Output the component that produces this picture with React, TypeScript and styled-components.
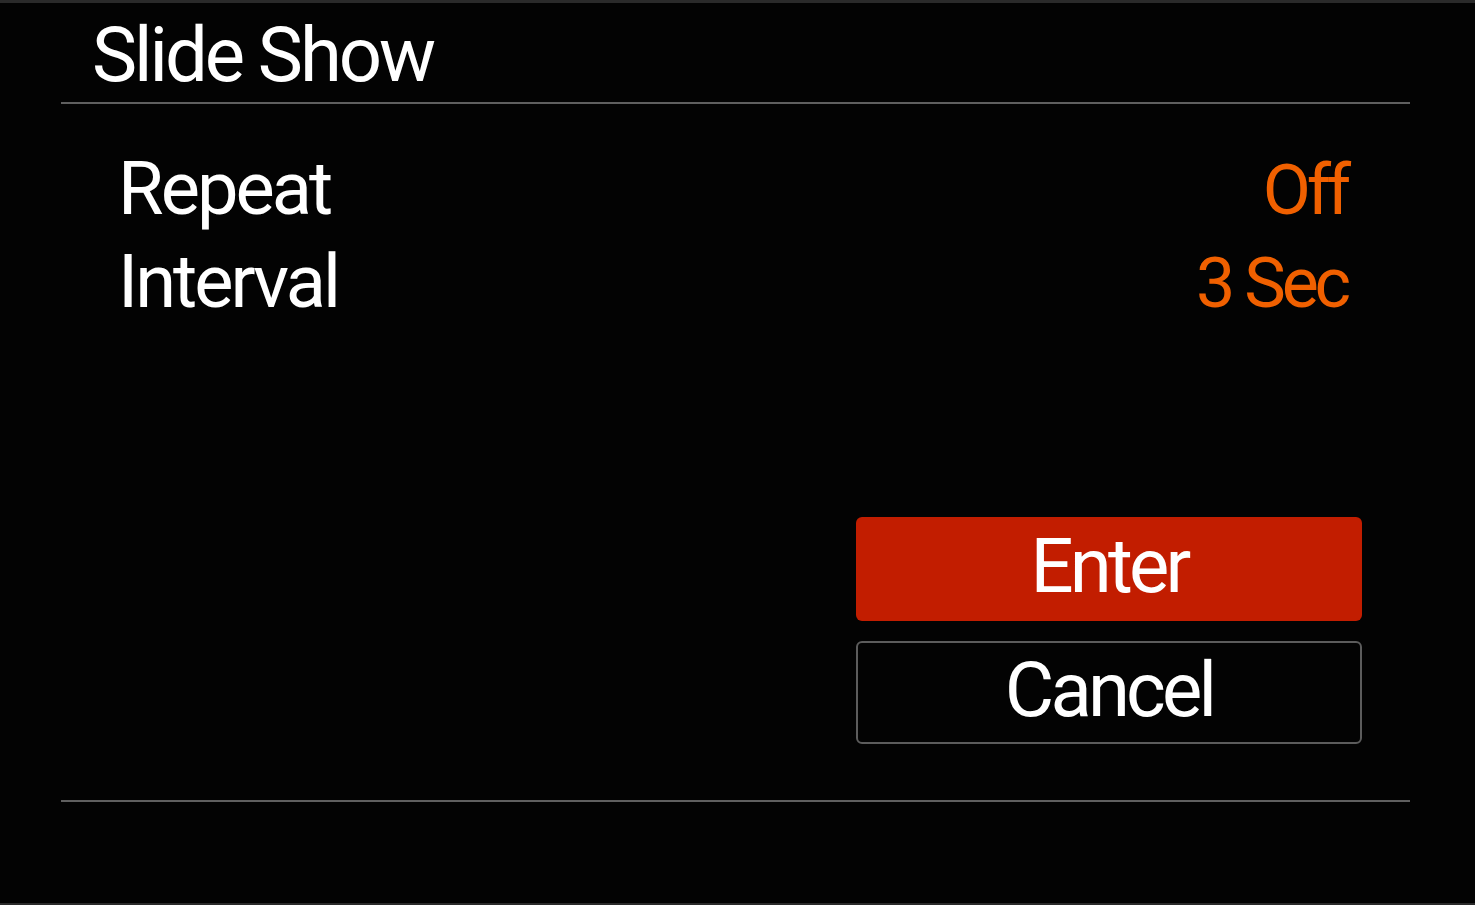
import React from "react";
import styled, { createGlobalStyle } from "styled-components";

const Global = createGlobalStyle`
  html, body {
    margin: 0;
    padding: 0;
    background: #000;
  }
  * { box-sizing: border-box; }
`;

const Screen = styled.div`
  width: 1475px;
  height: 905px;
  background: #030303;
  border-top: 3px solid #2a2a2a;
  border-bottom: 2px solid #2a2a2a;
  display: flex;
  flex-direction: column;
  font-family: Roboto, "Liberation Sans", sans-serif;
  color: #fff;
  overflow: hidden;
`;

const Header = styled.header`
  height: 99px;
  padding: 14px 0 0 92px;
`;

const Title = styled.h1`
  margin: 0;
  font-size: 76px;
  line-height: 76px;
  font-weight: 400;
  letter-spacing: -0.04em;
`;

const Divider = styled.hr`
  margin: 0 65px 0 61px;
  border: none;
  height: 2px;
  background: #5f5f5f;
`;

const Body = styled.main`
  flex: 1;
  display: flex;
  flex-direction: column;
  padding-top: 38px;
`;

const List = styled.ul`
  list-style: none;
  margin: 0;
  padding: 0 128px 0 118px;
`;

const Row = styled.li`
  display: flex;
  justify-content: space-between;
  align-items: baseline;
  height: 93px;
  line-height: 93px;
  font-size: 74px;
  letter-spacing: -0.04em;
`;

const Label = styled.span`
  color: #fff;
`;

const Value = styled.span`
  color: #f06000;
  font-size: 70px;
  letter-spacing: -0.06em;
`;

const Actions = styled.div`
  margin-top: 189px;
  margin-right: 113px;
  align-self: flex-end;
  width: 506px;
  display: flex;
  flex-direction: column;
  gap: 20px;
`;

const Button = styled.button<{ $primary?: boolean }>`
  height: ${(p) => (p.$primary ? "104px" : "103px")};
  border-radius: 6px;
  border: ${(p) => (p.$primary ? "none" : "2px solid #5c5c5c")};
  background: ${(p) => (p.$primary ? "#c21d00" : "#030303")};
  color: #fff;
  font-family: Roboto, "Liberation Sans", sans-serif;
  font-size: 76px;
  line-height: 76px;
  letter-spacing: -0.05em;
  padding: 0 0 6px;
  display: flex;
  align-items: center;
  justify-content: center;
`;

const Footer = styled.div`
  margin-top: 56px;
`;

export default function App() {
  return (
    <>
      <Global />
      <Screen>
        <Header>
          <Title>Slide Show</Title>
        </Header>
        <Divider />
        <Body>
          <List>
            <Row>
              <Label>Repeat</Label>
              <Value>Off</Value>
            </Row>
            <Row>
              <Label>Interval</Label>
              <Value>3 Sec</Value>
            </Row>
          </List>
          <Actions>
            <Button $primary>Enter</Button>
            <Button>Cancel</Button>
          </Actions>
          <Footer>
            <Divider />
          </Footer>
        </Body>
      </Screen>
    </>
  );
}
